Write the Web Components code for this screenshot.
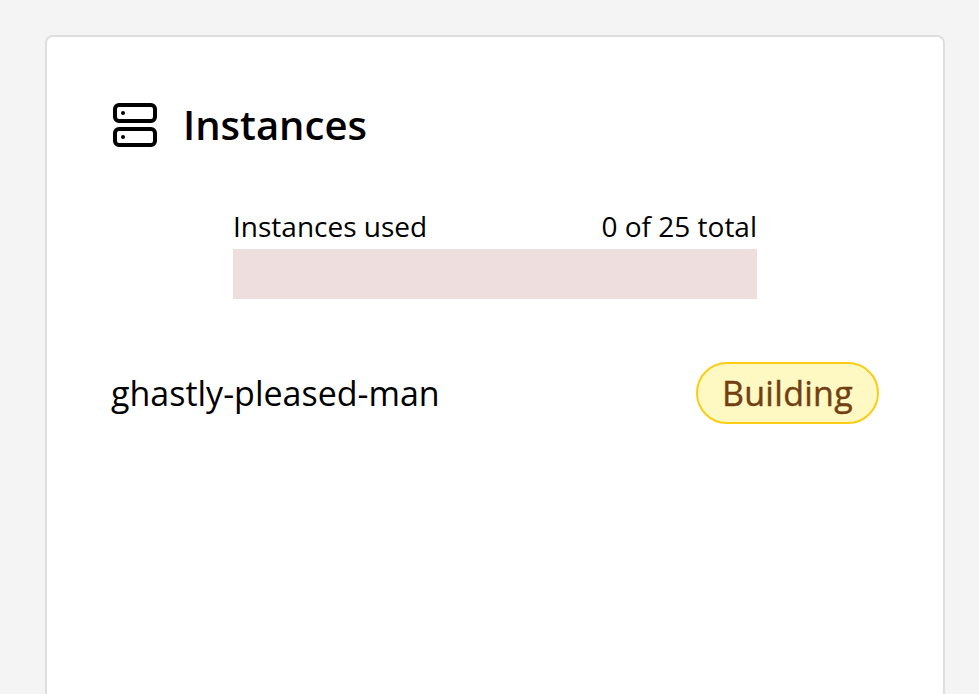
<!DOCTYPE html>
<html lang="en">
<head>
<meta charset="utf-8">
<title>Instances</title>
<style>
html,body{margin:0;height:100%;overflow:hidden;background:#f4f4f4}
body{display:flow-root;font-family:"Open Sans","Noto Sans",sans-serif;color:#000}
</style>
</head>
<body>
<dashboard-card>
  <card-heading slot="heading">Instances</card-heading>
  <usage-meter><span slot="label">Instances used</span><span slot="value">0 of 25 total</span></usage-meter>
  <instance-row>ghastly-pleased-man<status-badge slot="status">Building</status-badge></instance-row>
</dashboard-card>
<script>
function define(name, html) {
  customElements.define(name, class extends HTMLElement {
    constructor() {
      super();
      this.attachShadow({ mode: "open" }).innerHTML = html;
    }
  });
}
define("dashboard-card", `
<style>
:host{display:block;box-sizing:border-box;width:900px;height:calc(100vh - 35px);margin:35px 0 0 45px;padding:64px 64px 0;background:#fff;border:2px solid #dedede;border-bottom:0;border-radius:8px 8px 0 0}
</style>
<slot name="heading"></slot><slot></slot>`);
define("card-heading", `
<style>
:host{display:flex;align-items:center;gap:24px;height:48px}
svg{display:block;width:48px;height:48px}
h2{margin:0;font-size:40px;line-height:48px;font-weight:600}
</style>
<svg viewBox="0 0 24 24" fill="none" stroke="currentColor" stroke-width="2" stroke-linecap="round" stroke-linejoin="round"><rect x="2" y="2" width="20" height="8" rx="2"/><rect x="2" y="14" width="20" height="8" rx="2"/><path d="M6 6h.01M6 18h.01"/></svg>
<h2><slot></slot></h2>`);
define("usage-meter", `
<style>
:host{display:block;width:524px;margin:56px auto 0}
.labels{display:flex;justify-content:space-between;height:44px;font-size:28px;line-height:42px}
.bar{height:50px;background:#eedede}
</style>
<div class="labels"><slot name="label"></slot><slot name="value"></slot></div>
<div class="bar"></div>`);
define("instance-row", `
<style>
:host{display:flex;align-items:center;justify-content:space-between;margin-top:63px;font-size:34px;line-height:56px}
</style>
<span class="name"><slot></slot></span><slot name="status"></slot>`);
define("status-badge", `
<style>
:host{display:block;box-sizing:border-box;width:183px;height:62px;padding:1px 0;text-align:center;border:2px solid #facc15;border-radius:31px;background:#fef9c3;color:#713f12;font-size:34px;line-height:56px;font-weight:500;letter-spacing:.3px;-webkit-text-stroke:.4px currentColor}
</style>
<slot></slot>`);
</script>
</body>
</html>
